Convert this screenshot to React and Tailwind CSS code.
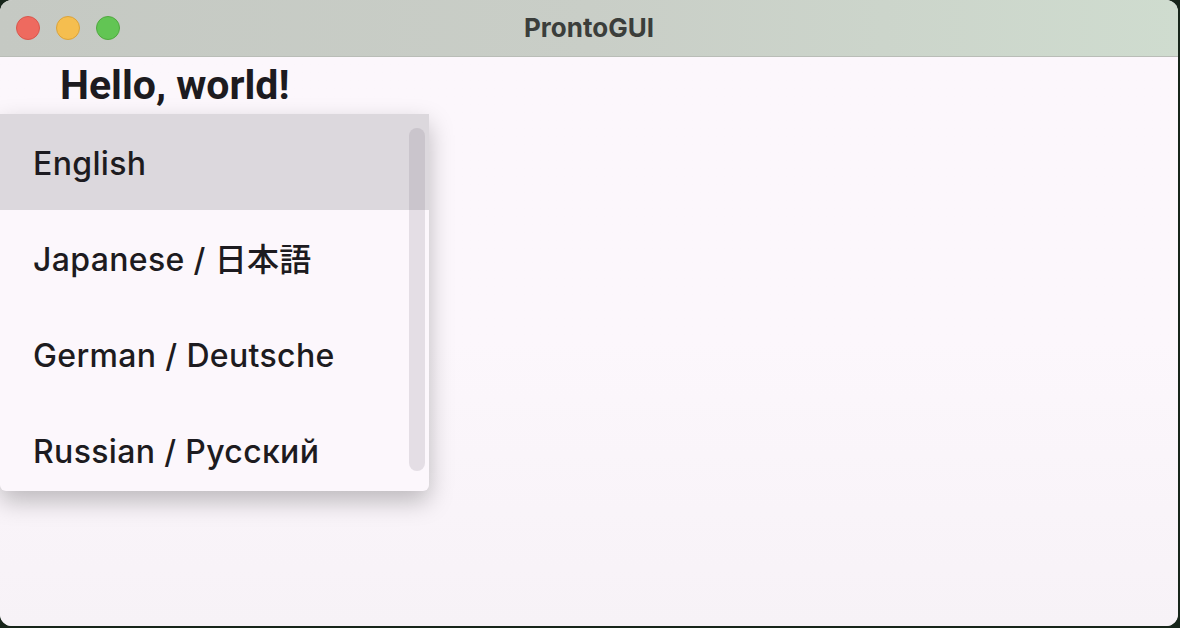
import React from "react";

export default function App() {
  const items = ["English", "Japanese / 日本語", "German / Deutsche", "Russian / Русский"];
  return (
    <div className="w-[1180px] h-[628px] bg-[#17251a] overflow-hidden">
      <div className="w-[1178px] h-[626px] rounded-[12px] overflow-hidden flex flex-col bg-[#fcf7fc]">
        <div className="h-[57px] shrink-0 relative flex items-center justify-center bg-gradient-to-r from-[#c5c9c3] via-[#c9cec7] to-[#cfdccf] border-b border-[#b9bdb7]">
          <div className="absolute left-[16px] top-[16px] flex gap-[16px]">
            <span className="w-[24px] h-[24px] rounded-full bg-[#ee6a5f] border border-[#d9574d]" />
            <span className="w-[24px] h-[24px] rounded-full bg-[#f5be4f] border border-[#dba33a]" />
            <span className="w-[24px] h-[24px] rounded-full bg-[#62c554] border border-[#50a93f]" />
          </div>
          <span className="text-[26px] font-bold text-[#3b3e3b] leading-none" style={{ fontFamily: '"Inter", "Liberation Sans", sans-serif' }}>
            ProntoGUI
          </span>
        </div>
        <div className="relative flex-1 bg-gradient-to-b from-[#fcf7fc] via-[#fcf7fc] to-[#f7f2f7]">
          <h1 className="pl-[60px] pt-[4px] text-[41px] font-bold text-[#1d1b20] leading-[48px]" style={{ fontFamily: 'Roboto, "Liberation Sans", sans-serif' }}>
            Hello, world!
          </h1>
          <div className="absolute left-0 top-[57px] w-[429px] h-[377px] bg-[#fcf7fc] rounded-br-[6px] rounded-bl-[6px] shadow-[0_10px_24px_rgba(0,0,0,0.25)] overflow-hidden">
            <div className="flex flex-col">
              {items.map((t, i) => (
                <div
                  key={t}
                  className={`h-[96px] shrink-0 flex items-center pl-[33px] pt-[3px] text-[32px] tracking-[0.35px] font-medium text-[#1d1b20] ${i === 0 ? "bg-[#dcd8dd]" : ""}`}
                  style={{ fontFamily: 'Inter, "Noto Sans CJK JP", sans-serif' }}
                >
                  {t}
                </div>
              ))}
            </div>
            <div className="absolute left-[409px] top-[14px] w-[16px] h-[343px] rounded-full bg-[rgba(120,110,125,0.18)]" />
          </div>
        </div>
      </div>
    </div>
  );
}
